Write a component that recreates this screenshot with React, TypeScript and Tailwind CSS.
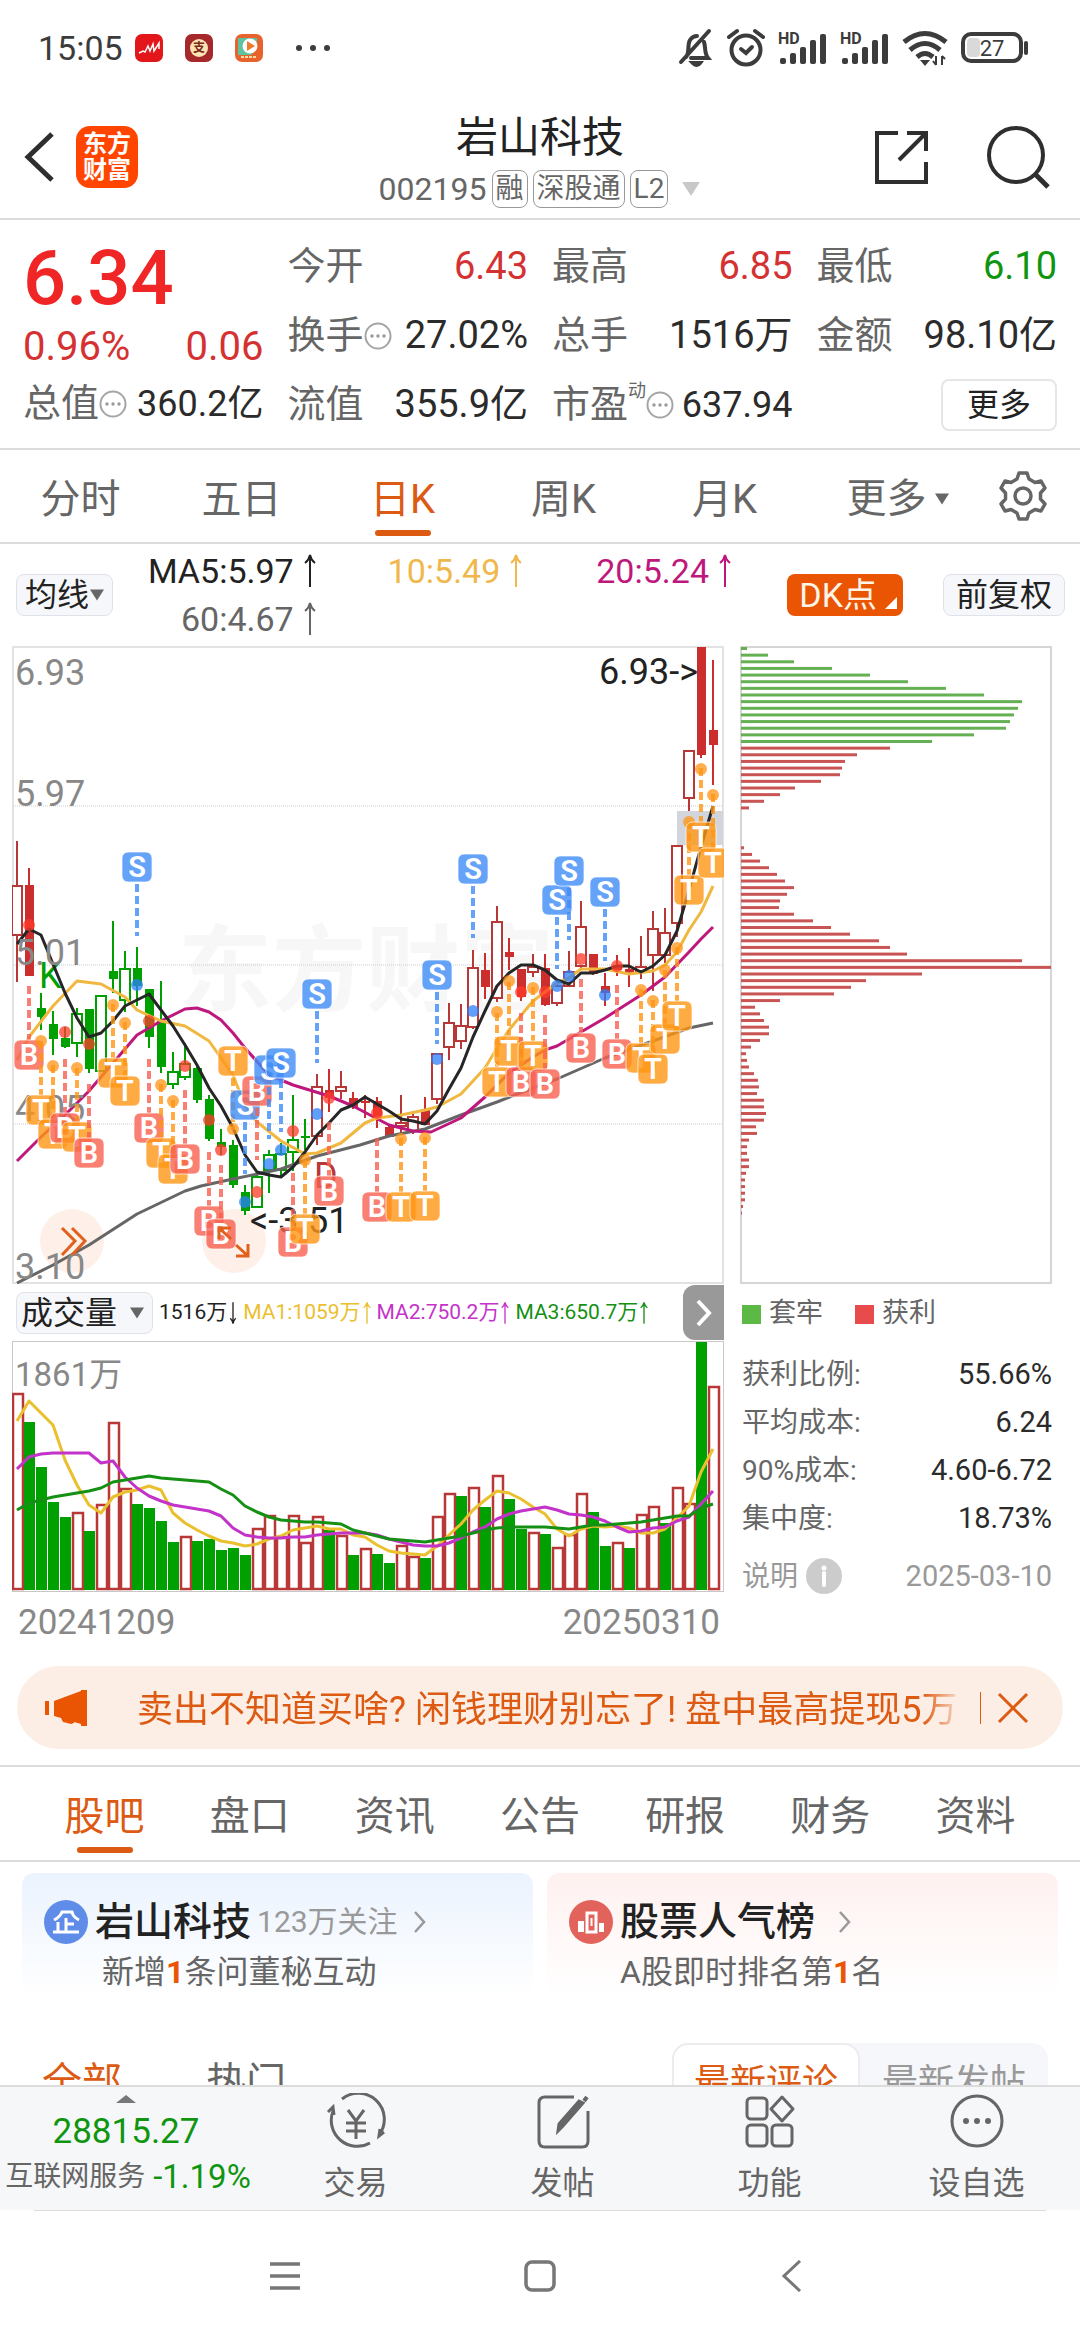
import React, { ReactNode, useState } from "react";

type Candle = [kind: "R" | "r" | "G" | "g", high: number, top: number, bottom: number, low: number];
type Signal = [kind: "B" | "S" | "T", index: number, dot: number, badge: number];

// upper case = filled body, lower case = hollow body
const CANDLES: Candle[] = [
  ["r", 841, 886, 935, 982], ["R", 868, 885, 976, 976], ["G", 993, 1008, 1017, 1030], ["G", 1011, 1024, 1039, 1055],
  ["G", 1027, 1038, 1047, 1048], ["g", 1008, 1014, 1043, 1057], ["G", 1009, 1009, 1069, 1073], ["g", 995, 996, 1071, 1071],
  ["G", 921, 971, 979, 993], ["g", 951, 969, 1000, 1012], ["G", 947, 968, 986, 1006], ["G", 989, 989, 1037, 1048],
  ["G", 981, 1021, 1067, 1073], ["g", 1052, 1072, 1084, 1089], ["g", 1043, 1064, 1077, 1080], ["G", 1067, 1068, 1100, 1103],
  ["G", 1095, 1099, 1139, 1141], ["G", 1129, 1142, 1147, 1155], ["G", 1140, 1145, 1185, 1188], ["G", 1185, 1192, 1211, 1215],
  ["g", 1174, 1177, 1207, 1208], ["g", 1150, 1155, 1170, 1193], ["g", 1143, 1154, 1170, 1176], ["g", 1095, 1140, 1152, 1171],
  ["G", 1119, 1136, 1138, 1150], ["r", 1074, 1087, 1136, 1145], ["R", 1069, 1090, 1098, 1112], ["r", 1071, 1087, 1091, 1099],
  ["R", 1092, 1098, 1107, 1109], ["R", 1095, 1101, 1103, 1118], ["R", 1097, 1101, 1119, 1128], ["R", 1124, 1127, 1137, 1137],
  ["r", 1095, 1123, 1126, 1133], ["r", 1111, 1117, 1131, 1134], ["R", 1097, 1109, 1125, 1125], ["r", 1053, 1054, 1099, 1104],
  ["r", 1003, 1023, 1047, 1060], ["r", 1004, 1026, 1041, 1049], ["r", 950, 968, 1027, 1029], ["R", 953, 970, 987, 999],
  ["r", 906, 922, 998, 1002], ["R", 938, 952, 957, 970], ["R", 969, 969, 997, 1001], ["r", 954, 967, 972, 977],
  ["R", 954, 968, 1005, 1006], ["r", 984, 986, 1003, 1006], ["r", 951, 972, 986, 987], ["r", 901, 927, 966, 968],
  ["R", 954, 954, 974, 975], ["R", 973, 986, 993, 1006], ["R", 955, 965, 970, 976], ["R", 948, 969, 973, 987],
  ["r", 936, 967, 971, 979], ["r", 911, 929, 955, 991], ["r", 908, 933, 955, 963], ["r", 845, 846, 923, 937],
  ["r", 750, 751, 798, 811], ["R", 647, 647, 755, 758], ["R", 660, 730, 745, 785],
];

const SIGNALS: Signal[] = [
  ["B", 1, 925, 1055], ["T", 2, 1041, 1110], ["T", 3, 1066, 1134], ["B", 4, 1032, 1128], ["T", 5, 1068, 1137],
  ["B", 6, 1044, 1153], ["T", 8, 1005, 1073], ["T", 9, 1023, 1091], ["S", 10, 985, 867], ["B", 11, 1021, 1128],
  ["T", 12, 1085, 1153], ["T", 13, 1101, 1169], ["B", 14, 1066, 1159], ["B", 16, 1120, 1221], ["B", 17, 1150, 1234],
  ["T", 18, 1129, 1061], ["S", 19, 1202, 1105], ["B", 20, 1192, 1091], ["S", 21, 1164, 1070], ["S", 22, 1150, 1063],
  ["B", 23, 1131, 1242], ["T", 24, 1160, 1229], ["S", 25, 1114, 994], ["B", 26, 1098, 1191], ["B", 30, 1113, 1207],
  ["T", 32, 1139, 1207], ["T", 34, 1138, 1206], ["S", 35, 1059, 975], ["S", 38, 1011, 869], ["T", 40, 1012, 1082],
  ["T", 41, 981, 1051], ["B", 42, 992, 1082], ["T", 43, 988, 1056], ["B", 44, 992, 1084], ["S", 45, 986, 900],
  ["S", 46, 976, 871], ["B", 47, 959, 1048], ["S", 49, 995, 892], ["B", 50, 966, 1054], ["T", 52, 990, 1058],
  ["T", 53, 1001, 1069], ["T", 54, 970, 1039], ["T", 55, 948, 1016], ["T", 56, 822, 890], ["T", 57, 769, 837],
  ["T", 58, 795, 863],
];

const SIGNAL_COLORS = {
  B: { badge: "#f8604f", dot: "#ff3b2a" },
  S: { badge: "#3f8cf8", dot: "#2b80fb" },
  T: { badge: "#ff9614", dot: "#ff9416" },
};

const PRICE_LINES = [
  {
    color: "#666666",
    points:
      "17,1283 53,1265 89,1245 137,1214 185,1191 201,1186 233,1179 281,1169 317,1156 360,1145 389,1136 425,1129 461,1115 497,1102 533,1088 557,1079 605,1058 653,1041 689,1028 713,1023",
  },
  {
    color: "#be187d",
    points:
      "17,1161 41,1137 65,1115 89,1091 113,1063 137,1035 161,1021 185,1009 197,1008 209,1012 221,1020 233,1033 245,1048 269,1075 293,1085 329,1096 353,1106 370,1115 389,1125 413,1131 431,1132 461,1118 485,1097 509,1073 533,1057 545,1050 557,1046 605,1018 641,995 665,977 689,952 701,939 713,927",
  },
  {
    color: "#f0b840",
    points:
      "17,1060 29,1037 53,1006 77,981 101,984 125,997 137,1010 161,1021 185,1026 209,1041 233,1075 245,1106 257,1122 281,1141 305,1154 317,1153 341,1143 365,1123 377,1118 401,1115 425,1110 437,1107 461,1094 485,1068 497,1048 509,1030 533,1001 557,983 569,978 581,969 605,969 629,974 653,971 665,965 677,952 689,930 701,912 713,886",
  },
  {
    color: "#262626",
    points:
      "17,944 29,929 41,935 53,964 65,993 77,1018 89,1037 101,1033 113,1021 125,1006 137,1000 149,994 161,1010 173,1026 185,1045 197,1065 209,1088 221,1106 233,1128 245,1155 257,1172 269,1175 281,1177 293,1167 305,1152 317,1135 329,1123 341,1110 353,1105 365,1097 377,1104 389,1111 401,1119 413,1121 425,1124 437,1111 449,1089 461,1068 473,1037 485,1011 497,986 509,973 521,965 533,965 545,970 557,980 569,984 581,973 593,973 605,970 617,966 629,966 641,972 653,966 665,955 677,931 689,890 701,847 713,806",
  },
];

const VOLUME_KINDS = "RGGGGRGRRRGGGGRGGGGGRRRRRRGRGRGGRRGRRGRGRGGRGRRRGGRGRRGRRGR";
const VOLUME_TOPS = [
  1394, 1422, 1467, 1502, 1517, 1513, 1531, 1505, 1423, 1489, 1504, 1508, 1521, 1542, 1537, 1541, 1539, 1550, 1548, 1555,
  1529, 1516, 1537, 1516, 1543, 1517, 1530, 1536, 1555, 1549, 1554, 1563, 1546, 1557, 1558, 1517, 1494, 1496, 1488, 1507,
  1476, 1499, 1529, 1533, 1534, 1548, 1535, 1494, 1512, 1546, 1543, 1548, 1515, 1507, 1523, 1488, 1504, 1342, 1387,
];

const VOLUME_LINES = [
  {
    color: "#eac02e",
    values: [
      1421, 1401, 1413, 1425, 1460, 1485, 1505, 1513, 1497, 1492, 1490, 1486, 1490, 1513, 1523, 1530, 1536, 1541, 1543, 1546,
      1544, 1539, 1536, 1530, 1528, 1526, 1529, 1529, 1535, 1537, 1545, 1551, 1553, 1554, 1555, 1546, 1535, 1524, 1510, 1500,
      1491, 1493, 1499, 1507, 1514, 1529, 1536, 1529, 1526, 1527, 1526, 1528, 1533, 1533, 1529, 1518, 1506, 1472, 1449,
    ],
  },
  {
    color: "#c433c9",
    values: [
      1469, 1457, 1454, 1453, 1453, 1453, 1453, 1463, 1461, 1477, 1488, 1496, 1501, 1505, 1507, 1509, 1511, 1516, 1528, 1535,
      1537, 1538, 1538, 1537, 1537, 1535, 1534, 1533, 1533, 1533, 1535, 1539, 1542, 1545, 1546, 1546, 1543, 1538, 1532, 1527,
      1519, 1514, 1511, 1509, 1507, 1510, 1514, 1515, 1517, 1521, 1527, 1532, 1531, 1528, 1527, 1521, 1517, 1504, 1491,
    ],
  },
  {
    color: "#159015",
    values: [
      1510, 1503, 1500, 1497, 1495, 1493, 1491, 1488, 1482, 1480, 1478, 1476, 1478, 1479, 1480, 1481, 1482, 1489, 1495, 1506,
      1512, 1517, 1520, 1521, 1522, 1522, 1523, 1524, 1530, 1533, 1536, 1539, 1540, 1541, 1542, 1540, 1538, 1536, 1533, 1530,
      1528, 1527, 1527, 1527, 1527, 1528, 1529, 1527, 1525, 1525, 1524, 1523, 1522, 1520, 1518, 1516, 1516, 1508, 1504,
    ],
  },
];

const TRAPPED = [6, 27, 53, 91, 129, 167, 205, 243, 281, 277, 273, 269, 265, 233, 191];
const PROFIT = [
  149, 116, 104, 101, 99, 80, 54, 39, 23, 8, 0, 0, 0, 0, 0, 3, 11, 19, 28, 36, 44, 53, 46, 39, 38, 53, 72, 90, 109, 138, 149,
  166, 281, 310, 181, 125, 110, 93, 39, 14, 19, 23, 28, 28, 19, 10, 5, 6, 8, 13, 17, 18, 16, 23, 23, 25, 23, 15, 16, 8, 6, 6,
  8, 8, 5, 4, 4, 4, 4, 2, 1,
];

const xOf = (i: number) => 17 + i * 12;

function Triangle({ className }: { className: string }) {
  return (
    <svg className={className} viewBox="0 0 14 11" fill="currentColor" aria-hidden="true">
      <path d="M0 0h14L7 11z" />
    </svg>
  );
}

function TrendArrow({ down, className = "h-9 w-3" }: { down?: boolean; className?: string }) {
  return (
    <svg className={className} viewBox="0 0 12 36" fill="none" stroke="currentColor" strokeWidth="2" aria-hidden="true">
      {down ? <path d="M6 2v31M2 26q3 3 4 8q1-5 4-8" /> : <path d="M6 34V3M1 10q4-3 5-8q1 5 5 8" />}
    </svg>
  );
}

function MoreDots() {
  return (
    <svg className="h-7 w-7 shrink-0" viewBox="0 0 28 28" aria-hidden="true">
      <circle cx="14" cy="14" r="12.5" fill="none" stroke="#a5a5a5" strokeWidth="2" />
      <g fill="#999">
        <circle cx="8" cy="14" r="1.7" />
        <circle cx="14" cy="14" r="1.7" />
        <circle cx="20" cy="14" r="1.7" />
      </g>
    </svg>
  );
}

function SignalBars() {
  return (
    <svg className="h-9 w-[50px]" viewBox="0 0 50 36" fill="#3c3c3c" aria-hidden="true">
      <text x="0" y="14" fontSize="16" fontWeight="700">HD</text>
      <rect x="2" y="28" width="6" height="6" rx="2" />
      <rect x="12" y="23" width="6" height="11" rx="2" />
      <rect x="22" y="17" width="6" height="17" rx="2" />
      <rect x="32" y="10" width="6" height="24" rx="2" />
      <rect x="42" y="4" width="6" height="30" rx="2" />
    </svg>
  );
}

function StatusBar() {
  return (
    <div className="flex h-24 shrink-0 items-center justify-between pl-[38px] pr-[50px] text-[#3c3c3c]">
      <div className="flex items-center">
        <span className="mr-3 text-[34px]">15:05</span>
        <svg className="h-7 w-32" viewBox="0 0 128 28" aria-hidden="true">
          <rect width="28" height="28" rx="7" fill="#e3171b" />
          <path d="M4 19l4-2 2 1 3-6 2 5 3-7 1 7 5-8v6" fill="none" stroke="#fff" strokeWidth="1.5" />
          <rect x="50" width="28" height="28" rx="7" fill="#a5282c" />
          <circle cx="64" cy="14" r="9" fill="#fbe3b4" />
          <text x="64" y="18" fontSize="12" fontWeight="700" textAnchor="middle" fill="#7a2a18">支</text>
          <rect x="100" width="28" height="28" rx="7" fill="#e8622d" />
          <path d="M103 4h19v10l-6 7h-13z" fill="#5fc2a0" />
          <circle cx="115" cy="12" r="7.5" fill="#fff" />
          <path d="M112 7l8 5-8 5z" fill="#f07a2c" />
          <path d="M106 23h16" stroke="#ffd9a0" strokeWidth="2" strokeDasharray="3 1" />
        </svg>
        <svg className="ml-8 h-2 w-9" viewBox="0 0 36 8" fill="#3c3c3c" aria-hidden="true">
          <circle cx="4" cy="4" r="3" />
          <circle cx="18" cy="4" r="3" />
          <circle cx="32" cy="4" r="3" />
        </svg>
      </div>
      <div className="flex items-center gap-3">
        <svg className="h-10 w-9" viewBox="0 0 36 40" fill="none" stroke="#3c3c3c" strokeWidth="4" strokeLinecap="round" aria-hidden="true">
          <path d="M31 3L3 34M8 29c4-5 1-12 4-17c2-3 4-4 7-4M26 14c2 6 0 11 4 16H13" />
          <path d="M15 35q4 4 7 0z" fill="#3c3c3c" />
        </svg>
        <svg className="h-10 w-10" viewBox="0 0 40 40" fill="none" stroke="#3c3c3c" strokeWidth="4" strokeLinecap="round" aria-hidden="true">
          <circle cx="20" cy="22" r="14.5" />
          <path d="M3 9l8-6M37 9l-8-6" />
          <path d="M15 21l5 4 6-6" />
        </svg>
        <SignalBars />
        <SignalBars />
        <svg className="h-9 w-[46px]" viewBox="0 0 46 36" fill="none" stroke="#3c3c3c" strokeWidth="5" aria-hidden="true">
          <path d="M2 12q21-17 42 0M8 20q15-13 30 0M15 27q8-7 16 0" />
          <path d="M18 30h10l-5 6z" fill="#3c3c3c" stroke="none" />
          <path d="M34 26v9M40 26v9M31 31l3 4M43 29l-3-3" strokeWidth="2" />
        </svg>
        <svg className="h-8 w-[70px]" viewBox="0 0 70 32" aria-hidden="true">
          <rect x="3" y="2" width="58" height="27" rx="8" fill="none" stroke="#3c3c3c" strokeWidth="4" />
          <rect x="7" y="6" width="13" height="19" rx="4" fill="#d9d9d9" />
          <path d="M66 11v10" stroke="#3c3c3c" strokeWidth="4" strokeLinecap="round" />
          <text x="32" y="24" fontSize="22" textAnchor="middle" fill="#3c3c3c">27</text>
        </svg>
      </div>
    </div>
  );
}

function Header() {
  return (
    <header className="grid h-[124px] shrink-0 grid-cols-[1fr_auto_1fr] items-center border-b-2 border-[#dcdcdc] px-6">
      <div className="flex items-center gap-5">
        <button aria-label="返回">
          <svg className="h-[52px] w-8" viewBox="0 0 32 52" fill="none" stroke="#2e2e2e" strokeWidth="5">
            <path d="M28 3L4 26l24 23" />
          </svg>
        </button>
        <div className="flex h-[62px] w-[62px] flex-col items-center justify-center rounded-[14px] bg-[#ff4500] text-2xl leading-[26px] font-bold text-white">
          <span>东方</span>
          <span>财富</span>
        </div>
      </div>
      <div className="flex flex-col items-center pt-2.5">
        <h1 className="text-[42px] leading-[54px] text-[#222]">岩山科技</h1>
        <div className="flex items-center gap-[5px] text-[32px] leading-[48px] text-[#666]">
          <span>002195</span>
          <span className="rounded-lg border border-[#999] px-[3px] text-[28px] leading-9">融</span>
          <span className="rounded-lg border border-[#999] px-[3px] text-[28px] leading-9">深股通</span>
          <span className="rounded-lg border border-[#999] px-[3px] text-[28px] leading-9">L2</span>
          <Triangle className="ml-2 h-3.5 w-5 text-[#c8c8c8]" />
        </div>
      </div>
      <div className="flex items-center justify-end gap-14 pr-1.5">
        <button aria-label="分享">
          <svg className="h-14 w-14" viewBox="0 0 56 56" fill="none" stroke="#2e2e2e" strokeWidth="4">
            <path d="M24 4H3v49h49V33M33 4h19v18M25 31L52 4" />
          </svg>
        </button>
        <button aria-label="搜索">
          <svg className="h-16 w-16" viewBox="0 0 64 64" fill="none" stroke="#2e2e2e" strokeWidth="4">
            <circle cx="30" cy="30" r="27" />
            <path d="M49 49l13 13" strokeWidth="5" />
          </svg>
        </button>
      </div>
    </header>
  );
}

function Stat({ label, children, tone = "text-[#2b2b2b]" }: { label: ReactNode; children: ReactNode; tone?: string }) {
  return (
    <div className="flex h-[69px] items-center justify-between whitespace-nowrap">
      <dt className="flex items-center text-[38px] text-[#666]">{label}</dt>
      <dd className={tone}>{children}</dd>
    </div>
  );
}

function Quote() {
  return (
    <section className="grid shrink-0 grid-cols-4 gap-6 border-b-2 border-[#dcdcdc] px-[23px] pt-3 pb-[9px] text-[38px]">
      <div>
        <div className="h-[93px] text-[76px] leading-[93px] font-medium text-[#f02525]">6.34</div>
        <div className="flex h-11 items-center justify-between text-[40px] text-[#d43232]">
          <span>0.96%</span>
          <span>0.06</span>
        </div>
        <dl>
          <Stat label={<>总值<MoreDots /></>}><span className="text-[36px]">360.2亿</span></Stat>
        </dl>
      </div>
      <dl>
        <Stat label="今开" tone="text-[#d43232]">6.43</Stat>
        <Stat label={<>换手<MoreDots /></>}>27.02%</Stat>
        <Stat label="流值">355.9亿</Stat>
      </dl>
      <dl>
        <Stat label="最高" tone="text-[#d43232]">6.85</Stat>
        <Stat label="总手">1516万</Stat>
        <Stat label={<>市盈<span className="self-start text-lg leading-5">动</span><MoreDots /></>}>
          <span className="text-[36px]">637.94</span>
        </Stat>
      </dl>
      <div>
        <dl>
          <Stat label="最低" tone="text-[#109510]">6.10</Stat>
          <Stat label="金额">98.10亿</Stat>
        </dl>
        <div className="flex h-[69px] items-center justify-end">
          <button className="h-[52px] rounded-lg border-2 border-[#e6e6e8] px-6 text-[32px] leading-none text-[#222]">更多</button>
        </div>
      </div>
    </section>
  );
}

function PeriodTabs() {
  const [active, setActive] = useState("日K");
  return (
    <nav className="grid h-[94px] shrink-0 grid-cols-[repeat(5,161fr)_185fr_66fr] border-b-2 border-[#dcdcdc] pr-6 text-[40px] text-[#666]">
      {["分时", "五日", "日K", "周K", "月K"].map((t) => (
        <button
          key={t}
          onClick={() => setActive(t)}
          className={active === t ? "flex flex-col items-center text-[#dd5a12]" : "flex flex-col items-center"}
        >
          <span className="pt-5 leading-[60px]">{t}</span>
          {active === t && <span className="h-1.5 w-14 rounded-full bg-[#dd5a12]" />}
        </button>
      ))}
      <button className="flex items-center justify-center gap-2 pt-1.5">
        更多
        <Triangle className="h-3 w-3.5" />
      </button>
      <button aria-label="设置" className="flex items-center justify-center">
        <svg className="h-[50px] w-[50px]" viewBox="0 0 50 50" fill="none" stroke="#666" strokeWidth="3.5" strokeLinejoin="round">
          <path d="M21 2h8l2 6 6 3.5 6-1.5 4 7-4.5 5v6l4.5 5-4 7-6-1.5-6 3.5-2 6h-8l-2-6-6-3.5-6 1.5-4-7 4.5-5v-6l-4.5-5 4-7 6 1.5 6-3.5z" />
          <circle cx="25" cy="25" r="8" />
        </svg>
      </button>
    </nav>
  );
}

function MaBar() {
  return (
    <div className="flex h-[102px] shrink-0 items-center pl-4 pr-[15px]">
      <label className="flex h-[42px] shrink-0 items-center rounded-lg border border-[#dfe2e8] bg-[#f6f7fa] px-2 text-[32px] text-[#222]">
        <select aria-label="均线类型" className="appearance-none bg-transparent leading-10">
          <option>均线</option>
        </select>
        <Triangle className="pointer-events-none h-3 w-3.5 text-[#666]" />
      </label>
      <div className="grid w-[622px] grid-cols-[204fr_208fr_210fr] justify-items-end pr-1 text-[34px] leading-[48px]">
        <span className="flex items-center gap-2.5 text-[#222]">MA5:5.97<TrendArrow /></span>
        <span className="flex items-center gap-2.5 text-[#f0b84c]">10:5.49<TrendArrow /></span>
        <span className="flex items-center gap-2.5 text-[#be187d]">20:5.24<TrendArrow /></span>
        <span className="flex items-center gap-2.5 text-[#666]">60:4.67<TrendArrow /></span>
      </div>
      <div className="ml-auto flex gap-10">
        <button className="flex h-[42px] items-center gap-2 rounded-lg bg-[#ea5504] pl-3 pr-1.5 text-[34px] text-[#fff4e8]">
          DK点
          <svg className="mt-4 h-3 w-3" viewBox="0 0 12 12" fill="#fff" aria-hidden="true">
            <path d="M12 0v12H0z" />
          </svg>
        </button>
        <button className="h-[42px] rounded-lg border border-[#dfe2e8] bg-[#f6f7fa] px-3 text-[32px] leading-10 text-[#222]">前复权</button>
      </div>
    </div>
  );
}

function SignalMark({ signal: [kind, index, dot, badge] }: { signal: Signal }) {
  const x = xOf(index);
  const below = badge > dot;
  const { badge: fill, dot: dotFill } = SIGNAL_COLORS[kind];
  return (
    <g>
      <path
        d={below ? `M${x} ${badge - 69}V${badge - 15}` : `M${x} ${badge + 17}V${badge + 69}`}
        stroke={fill}
        strokeWidth="4"
        strokeDasharray="8 4"
        opacity="0.8"
      />
      <circle cx={x} cy={dot} r="6" fill={dotFill} opacity="0.75" />
      <rect x={x - 15} y={badge - 15} width="30" height="30" rx="6" fill={fill} fillOpacity="0.8" stroke="#fff" strokeOpacity="0.7" />
      <text x={x} y={badge + 10} fontSize="29" fontWeight="600" textAnchor="middle" fill="#fff">{kind}</text>
    </g>
  );
}

function PriceChart() {
  return (
    <svg className="block w-full" viewBox="12 646 712 638" role="img" aria-label="日K线图">
      <rect x="13" y="647" width="710" height="636" fill="#fff" stroke="#e2e2e2" strokeWidth="2" />
      <text x="366" y="1004" fontSize="94" fontWeight="700" textAnchor="middle" fill="#f7f7f7">东方财富</text>
      {[806, 965, 1124].map((y) => (
        <path key={y} d={`M13 ${y}H723`} stroke="#ccc" strokeDasharray="1 1" />
      ))}
      <rect x="677" y="811" width="46" height="34" fill="#d3d5dc" />
      <circle cx="72" cy="1241" r="32" fill="#fef0e9" />
      <circle cx="234" cy="1241" r="32" fill="#fef0e9" />
      {CANDLES.map(([kind, high, top, bottom, low], i) => {
        const x = xOf(i);
        const red = kind === "R" || kind === "r";
        const filled = kind === "R" || kind === "G";
        const color = red ? (filled ? "#cc2d2d" : "#b83838") : "#00a000";
        return (
          <g key={i} stroke={color} strokeWidth="2">
            <path d={`M${x} ${high}V${top}M${x} ${bottom}V${low}`} />
            {filled ? (
              <rect x={x - 4} y={top} width="9" height={bottom - top} fill={color} stroke="none" />
            ) : (
              <rect x={x - 5} y={top} width="10" height={bottom - top} fill="#fff" />
            )}
          </g>
        );
      })}
      <text x="39" y="988" fontSize="36" fill="#00a000">K</text>
      <text x="314" y="1188" fontSize="36" fill="#b83838">D</text>
      {PRICE_LINES.map((l) => (
        <polyline key={l.color} points={l.points} fill="none" stroke={l.color} strokeWidth="3" strokeLinejoin="round" />
      ))}
      <g fontSize="36" fill="#222">
        <text x="698" y="684" textAnchor="end">6.93-&gt;</text>
        <text x="250" y="1233">&lt;-3.51</text>
      </g>
      <g fontSize="36" fill="#888">
        <text x="15" y="685">6.93</text>
        <text x="15" y="806">5.97</text>
        <text x="15" y="965">5.01</text>
        <text x="15" y="1121">4.05</text>
        <text x="15" y="1279">3.10</text>
      </g>
      {SIGNALS.map((s) => (
        <SignalMark key={s[1]} signal={s} />
      ))}
      <g fill="none" stroke="#e0601c" strokeWidth="3">
        <path d="M62 1228l13 13-13 14M72 1228l13 13-13 14" />
        <path d="M219 1239v-11h12M219 1228l12 11M248 1244v12h-12M248 1256l-12-11" />
      </g>
    </svg>
  );
}

function VolumeChart() {
  return (
    <svg className="block w-full" viewBox="12 1341 712 251" role="img" aria-label="成交量图">
      <rect x="12.5" y="1341.5" width="711" height="250" fill="#fff" stroke="#c8c8c8" />
      {VOLUME_TOPS.map((top, i) =>
        VOLUME_KINDS[i] === "G" ? (
          <rect key={i} x={xOf(i) - 5} y={top} width="11" height={1590 - top} fill="#00a000" />
        ) : (
          <rect key={i} x={xOf(i) - 4} y={top} width="10" height={1589 - top} fill="#fff" stroke="#b83838" strokeWidth="2.5" />
        ),
      )}
      {VOLUME_LINES.map((l) => (
        <polyline
          key={l.color}
          points={l.values.map((y, i) => `${xOf(i)},${y}`).join(" ")}
          fill="none"
          stroke={l.color}
          strokeWidth="3"
          strokeLinejoin="round"
        />
      ))}
      <text x="15" y="1386" fontSize="33" fill="#888">1861万</text>
    </svg>
  );
}

function CostChart() {
  return (
    <svg className="block w-full" viewBox="740 646 312 638" role="img" aria-label="筹码分布">
      <rect x="741" y="647" width="310" height="636" fill="#fff" stroke="#c9c9c9" strokeWidth="1.5" />
      {[...TRAPPED, ...PROFIT].map((w, i) => (
        <rect key={i} x="741" y={647 + i * 6.643} width={w} height="3" fill={i < TRAPPED.length ? "#66b054" : "#c95454"} />
      ))}
    </svg>
  );
}

function Charts() {
  return (
    <section className="grid shrink-0 grid-cols-[712fr_312fr] gap-4 pl-3 pr-7">
      <div>
        <PriceChart />
        <div className="flex h-[57px] items-center gap-1.5 pl-1 text-[21px]">
          <label className="flex h-[42px] shrink-0 items-center gap-3 rounded-lg border border-[#dfe2e8] bg-[#f6f7fa] pl-1 pr-2 text-[32px] text-[#222]">
            <select aria-label="副图指标" className="appearance-none bg-transparent leading-10">
              <option>成交量</option>
            </select>
            <Triangle className="pointer-events-none h-3 w-3.5 text-[#666]" />
          </label>
          <span className="flex items-center gap-0.5 whitespace-nowrap text-[#222]">1516万<TrendArrow down className="h-9 w-2" /></span>
          <span className="flex items-center gap-0.5 whitespace-nowrap text-[#eac02e]">MA1:1059万<TrendArrow className="h-9 w-2" /></span>
          <span className="flex items-center gap-0.5 whitespace-nowrap text-[#c433c9]">MA2:750.2万<TrendArrow className="h-9 w-2" /></span>
          <span className="flex items-center gap-0.5 whitespace-nowrap text-[#159015]">MA3:650.7万<TrendArrow className="h-9 w-2" /></span>
          <button aria-label="下一个指标" className="ml-auto flex h-[55px] w-[41px] shrink-0 items-center justify-center rounded-l-xl bg-[#999]">
            <svg className="h-7 w-4" viewBox="0 0 16 28" fill="none" stroke="#fff" strokeWidth="4">
              <path d="M2 2l11 12L2 26" />
            </svg>
          </button>
        </div>
        <VolumeChart />
        <div className="flex h-[62px] items-center justify-between pl-1.5 pr-1 text-[35px] text-[#888]">
          <span>20241209</span>
          <span>20250310</span>
        </div>
      </div>
      <div className="text-[28px] text-[#666]">
        <CostChart />
        <div className="pl-0.5">
          <div className="flex h-[60px] items-center text-[27px]">
            <span className="mr-2 h-[19px] w-[19px] bg-[#5cb946]" />
            套牢
            <span className="ml-8 mr-2 h-[19px] w-[19px] bg-[#e84b4b]" />
            获利
          </div>
          <dl className="pt-1.5">
            {[
              ["获利比例:", "55.66%"],
              ["平均成本:", "6.24"],
              ["90%成本:", "4.60-6.72"],
              ["集中度:", "18.73%"],
            ].map(([k, v]) => (
              <div key={k} className="flex h-12 items-center justify-between">
                <dt>{k}</dt>
                <dd className="text-[29px] text-[#2b2b2b]">{v}</dd>
              </div>
            ))}
          </dl>
          <div className="flex h-[68px] items-center text-[#999]">
            说明
            <svg className="ml-2 h-9 w-9" viewBox="0 0 36 36" aria-hidden="true">
              <circle cx="18" cy="18" r="18" fill="#ccc" />
              <circle cx="18" cy="10" r="2.5" fill="#fff" />
              <path d="M18 15v12" stroke="#fff" strokeWidth="4" strokeLinecap="round" />
            </svg>
            <span className="ml-auto text-[29px]">2025-03-10</span>
          </div>
        </div>
      </div>
    </section>
  );
}

function Banner() {
  return (
    <div className="mx-[17px] mt-3 mb-4 flex h-[83px] shrink-0 items-center rounded-full bg-[#fdeee5] pl-7 pr-[34px] text-[#dd5a12]">
      <svg className="h-9 w-11 shrink-0" viewBox="0 0 44 36" fill="#ea5504" aria-hidden="true">
        <path d="M0 11h4v14H0zM9 11L36 1V0h6v36h-6v-2l-7-2v1l-3 1-8-2-2-4-7-2z" />
      </svg>
      <p className="ml-12 flex-1 overflow-hidden pt-1 text-[36px] leading-[60px] whitespace-nowrap [mask-image:linear-gradient(to_right,#000_95%,transparent)]">
        卖出不知道买啥? 闲钱理财别忘了! 盘中最高提现5万
      </p>
      <span className="ml-4 h-8 w-px shrink-0 bg-[#dd5a12]" />
      <button aria-label="关闭" className="ml-4 shrink-0">
        <svg className="h-8 w-8" viewBox="0 0 32 32" fill="none" stroke="#dd5a12" strokeWidth="3">
          <path d="M2 2l28 28M30 2L2 30" />
        </svg>
      </button>
    </div>
  );
}

function ContentTabs() {
  const [active, setActive] = useState("股吧");
  return (
    <nav className="grid h-[97px] shrink-0 grid-cols-7 border-y-2 border-[#dcdcdc] px-8 text-[40px] text-[#666]">
      {["股吧", "盘口", "资讯", "公告", "研报", "财务", "资料"].map((t) => (
        <button
          key={t}
          onClick={() => setActive(t)}
          className={active === t ? "flex flex-col items-center text-[#dd5a12]" : "flex flex-col items-center"}
        >
          <span className="pt-5 leading-[60px]">{t}</span>
          {active === t && <span className="h-1.5 w-14 rounded-full bg-[#dd5a12]" />}
        </button>
      ))}
    </nav>
  );
}

function Chevron() {
  return (
    <svg className="ml-4 h-[22px] w-3" viewBox="0 0 12 22" fill="none" stroke="#999" strokeWidth="2.5" aria-hidden="true">
      <path d="M1 1l9 10-9 10" />
    </svg>
  );
}

function Cards() {
  return (
    <div className="grid shrink-0 grid-cols-2 gap-3.5 px-[22px] pt-[11px]">
      <a href="#company" className="rounded-xl bg-linear-to-b from-[#ebf3fe] to-white px-[22px] pt-6">
        <div className="flex h-[50px] items-center">
          <svg className="mr-[7px] h-11 w-11" viewBox="0 0 44 44" aria-hidden="true">
            <circle cx="22" cy="22" r="22" fill="#5f8ce8" />
            <path d="M10 20q6-3 8-8h10q1 5 7 8M22 18v14M22 24h8M14 22v10M9 32h26" fill="none" stroke="#fff" strokeWidth="3" />
          </svg>
          <span className="text-[39px] font-medium text-[#222]">岩山科技</span>
          <span className="ml-1.5 text-[30px] text-[#999]">123万关注</span>
          <Chevron />
        </div>
        <p className="pl-[58px] text-[32px] leading-[50px] text-[#666]">
          新增<b className="text-[#ea5504]">1</b>条问董秘互动
        </p>
      </a>
      <a href="#rank" className="rounded-xl bg-linear-to-b from-[#fef1f0] to-white px-[22px] pt-6">
        <div className="flex h-[50px] items-center">
          <svg className="mr-[7px] h-11 w-11" viewBox="0 0 44 44" aria-hidden="true">
            <circle cx="22" cy="22" r="22" fill="#e2625c" />
            <path d="M9 32V21h6v11zM30 32v-9h5v9z" fill="#fff" />
            <path d="M18 32V13h9v19z" fill="none" stroke="#fff" strokeWidth="3" />
            <path d="M22.5 18v8" stroke="#fff" strokeWidth="2" />
          </svg>
          <span className="mr-2 text-[39px] font-medium text-[#222]">股票人气榜</span>
          <Chevron />
        </div>
        <p className="pl-[51px] text-[32px] leading-[50px] text-[#666]">
          A股即时排名第<b className="text-[#ea5504]">1</b>名
        </p>
      </a>
    </div>
  );
}

function FeedTabs() {
  return (
    <div className="mt-[46px] flex h-20 shrink-0 items-center gap-[84px] pl-[42px] pr-8 text-[40px] text-[#666]">
      <button className="text-[#dd5a12]">全部</button>
      <button>热门</button>
      <div className="ml-auto flex h-20 rounded-t-2xl bg-[#f6f7fa] text-[36px]">
        <button className="rounded-2xl border-2 border-[#ececee] bg-white px-5 text-[#dd5a12]">最新评论</button>
        <button className="px-[22px] text-[#999]">最新发帖</button>
      </div>
    </div>
  );
}

function NavItem({ label, children }: { label: string; children: ReactNode }) {
  return (
    <button className="flex flex-col items-center pt-1.5 text-[32px] leading-[68px] text-[#666]">
      <svg className="h-14 w-[62px] shrink-0" viewBox="0 0 62 56" fill="none" stroke="#666" strokeWidth="3" aria-hidden="true">
        {children}
      </svg>
      {label}
    </button>
  );
}

function BottomBar() {
  return (
    <footer className="shrink-0 bg-white">
      <div className="grid h-[125px] grid-cols-[252fr_207fr_207fr_207fr_207fr] border-t-2 border-[#dcdcdc] bg-[#f6f7f9]">
        <button className="flex flex-col items-center whitespace-nowrap">
          <svg className="mt-2 h-2 w-5 shrink-0" viewBox="0 0 20 8" fill="#777" aria-hidden="true">
            <path d="M10 0l10 8H0z" />
          </svg>
          <span className="text-[35px] leading-[58px] text-[#109510]">28815.27</span>
          <span className="flex items-center pl-1 text-[28px] leading-8 text-[#666]">
            互联网服务<span className="ml-2 text-[33px] text-[#109510]">-1.19%</span>
          </span>
        </button>
        <NavItem label="交易">
          <path d="M17 6a26 26 0 0 1 37 36M55 36l-1 7 5-4M45 50A26 26 0 0 1 8 18M3 19l5-5 1 8" />
          <path d="M23 17l8 11 8-11M31 28v18M21 30h20M21 38h20" />
        </NavItem>
        <NavItem label="发帖">
          <path d="M42 4H13q-6 0-6 6v38q0 6 6 6h37q6 0 6-6V18" />
          <path d="M51 10L31 33l-5 5 1-7L47 8z" fill="#666" />
          <path d="M52 8l3-4" strokeWidth="4" />
        </NavItem>
        <NavItem label="功能">
          <rect x="8" y="5" width="20" height="21" rx="4" />
          <rect x="8" y="32" width="20" height="21" rx="4" />
          <rect x="33" y="32" width="20" height="21" rx="4" />
          <path d="M43 4l11 12-11 12-11-12z" strokeLinejoin="round" />
        </NavItem>
        <NavItem label="设自选">
          <circle cx="31" cy="28" r="25" />
          <g fill="#666" stroke="none">
            <circle cx="20" cy="28" r="3" />
            <circle cx="31" cy="28" r="3" />
            <circle cx="42" cy="28" r="3" />
          </g>
        </NavItem>
      </div>
      <div className="mx-[34px] border-t border-[#dcdcdc]" />
      <div className="grid h-[129px] grid-cols-3 items-center px-[30px] text-[#777]">
        <button aria-label="最近任务" className="flex justify-end pr-[69px]">
          <svg className="h-8 w-8" viewBox="0 0 32 32" fill="none" stroke="currentColor" strokeWidth="3.5">
            <path d="M1 4h30M1 16h30M1 28h30" />
          </svg>
        </button>
        <button aria-label="主屏幕" className="flex justify-center">
          <svg className="h-8 w-8" viewBox="0 0 32 32" fill="none" stroke="currentColor" strokeWidth="3.5">
            <rect x="2" y="2" width="28" height="28" rx="6" />
          </svg>
        </button>
        <button aria-label="后退" className="flex pl-[68px]">
          <svg className="h-8 w-8" viewBox="0 0 32 32" fill="none" stroke="currentColor" strokeWidth="3">
            <path d="M22 1L6 16l16 15" />
          </svg>
        </button>
      </div>
    </footer>
  );
}

export default function App() {
  return (
    <div className="flex h-screen flex-col bg-white font-[Roboto,'Noto_Sans_CJK_SC',sans-serif] leading-tight">
      <StatusBar />
      <Header />
      <main className="flex min-h-0 flex-1 flex-col overflow-hidden">
        <Quote />
        <PeriodTabs />
        <MaBar />
        <Charts />
        <Banner />
        <ContentTabs />
        <Cards />
        <FeedTabs />
      </main>
      <BottomBar />
    </div>
  );
}
